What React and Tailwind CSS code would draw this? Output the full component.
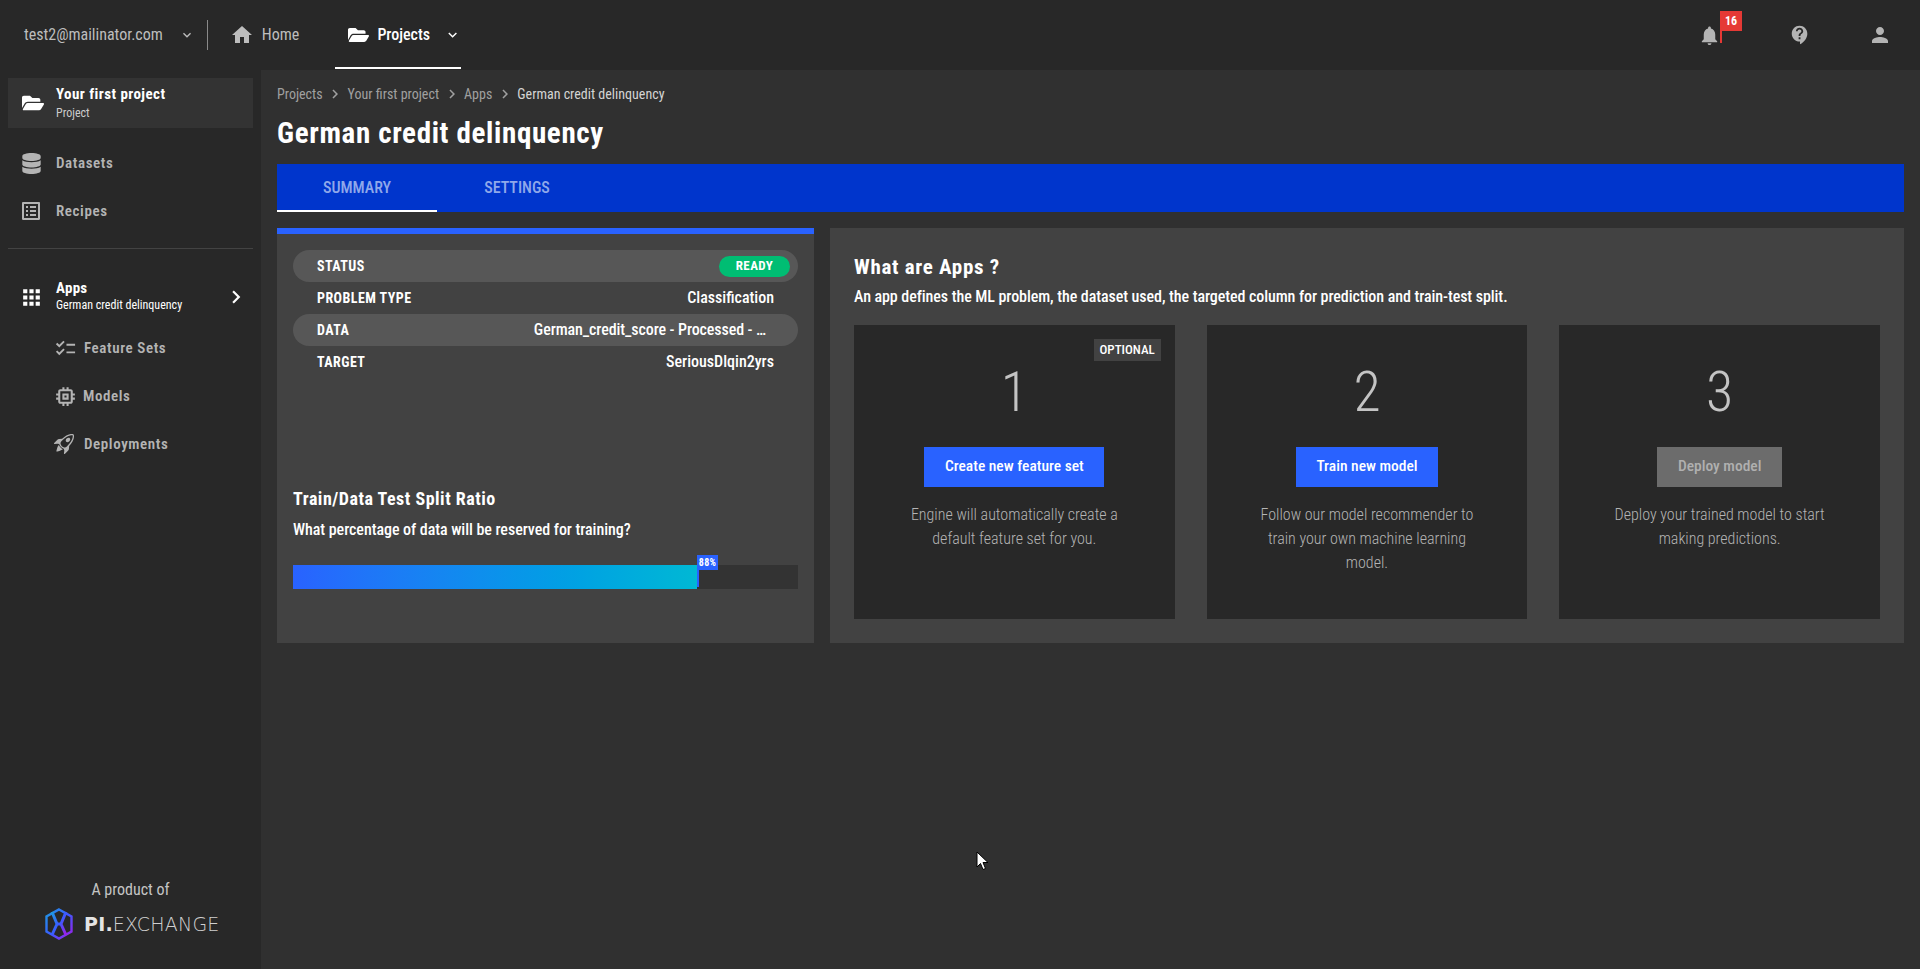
import React from "react";
import { FaDatabase, FaFolderOpen } from "react-icons/fa";
import {
  MdApps,
  MdChevronRight,
  MdContactSupport,
  MdHome,
  MdKeyboardArrowDown,
  MdNotifications,
  MdOutlineChecklist,
  MdOutlineListAlt,
  MdOutlineMemory,
  MdPerson,
} from "react-icons/md";
import { BsRocketTakeoff } from "react-icons/bs";

const BODY = "[font-family:Roboto,sans-serif] [font-stretch:75%]";
const HEAD = "[font-family:Roboto,sans-serif] [font-stretch:75%] font-bold";

const NAV_TOP = [
  { label: "Datasets", icon: FaDatabase, size: 21 },
  { label: "Recipes", icon: MdOutlineListAlt, size: 24 },
];

const NAV_SUB = [
  { label: "Feature Sets", icon: MdOutlineChecklist, size: 23, shift: "" },
  { label: "Models", icon: MdOutlineMemory, size: 25, shift: "-ml-px" },
  { label: "Deployments", icon: BsRocketTakeoff, size: 20, shift: "" },
];

const FACTS = [
  { label: "STATUS", pill: true },
  { label: "PROBLEM TYPE", value: "Classification" },
  { label: "DATA", value: "German_credit_score - Processed - …", inset: true },
  { label: "TARGET", value: "SeriousDlqin2yrs" },
];

const STEPS = [
  {
    n: 1,
    button: "Create new feature set",
    width: "w-[180px]",
    text: ["Engine will automatically create a", "default feature set for you."],
    optional: true,
  },
  {
    n: 2,
    button: "Train new model",
    width: "w-[142px]",
    text: ["Follow our model recommender to", "train your own machine learning", "model."],
  },
  {
    n: 3,
    button: "Deploy model",
    width: "w-[125px]",
    text: ["Deploy your trained model to start", "making predictions."],
    disabled: true,
  },
];

const Logo = () => (
  <svg width="28" height="32" viewBox="0 0 28 32" fill="none">
    <defs>
      <linearGradient id="lg" x1="0" y1="0" x2="1" y2="1">
        <stop offset="0" stopColor="#1e9be0" />
        <stop offset="0.5" stopColor="#3a5cff" />
        <stop offset="1" stopColor="#a01de8" />
      </linearGradient>
    </defs>
    <path d="M14 1.5 26.5 8.5V23.5L14 30.5 1.5 23.5V8.5Z" stroke="url(#lg)" strokeWidth="2.4" />
    <path d="M7 4 12 16 7 27M21 4 16 16 21 27M12 16H16" stroke="url(#lg)" strokeWidth="3" />
  </svg>
);

const Sidebar = () => (
  <aside className="flex w-[261px] shrink-0 flex-col bg-[#282828] text-[#b4b4b4]">
    <div className="mx-2 mt-2 flex h-[50px] items-center bg-[#333333]">
      <FaFolderOpen size={22} className="ml-[14px] text-white" />
      <div className="ml-[12px] pb-[2px]">
        <div className={`${HEAD} text-[15px] leading-5 tracking-[0.45px] text-white`}>Your first project</div>
        <div className={`${BODY} mt-px text-xs leading-4 text-[#cccccc]`}>Project</div>
      </div>
    </div>
    <div className="mt-[11px]">
      {NAV_TOP.map((item) => (
        <div key={item.label} className="flex h-12 items-center">
          <span className="flex w-14 justify-center pl-[6px]"><item.icon size={item.size} /></span>
          <span className={`${HEAD} text-[15px] font-semibold tracking-[0.6px]`}>{item.label}</span>
        </div>
      ))}
    </div>
    <div className="mx-2 mt-[13px] h-px bg-[#434343]" />
    <div className="mt-6 flex h-12 items-center text-white">
      <span className="flex w-14 justify-center pl-[7px]"><MdApps size={25} /></span>
      <div className="flex-1 pb-[2px]">
        <div className={`${HEAD} text-[15px] leading-[18px] tracking-[0.3px]`}>Apps</div>
        <div className={`${BODY} text-xs leading-4`}>German credit delinquency</div>
      </div>
      <MdChevronRight size={26} className="mr-3" />
    </div>
    <div className="mt-[3px]">
      {NAV_SUB.map((item) => (
        <div key={item.label} className="flex h-12 items-center pl-[54px]">
          <span className={`flex w-[30px] ${item.shift}`}><item.icon size={item.size} /></span>
          <span className={`${HEAD} text-[15px] font-semibold tracking-[0.6px]`}>{item.label}</span>
        </div>
      ))}
    </div>
    <div className="mt-auto pb-[29px]">
      <div className={`${BODY} text-center text-base leading-5 text-[#c4c4c4]`}>A product of</div>
      <div className="mt-2 flex items-center pl-[45px]">
        <Logo />
        <span className="ml-[11px] [font-family:'DejaVu_Sans',sans-serif] text-[19px] leading-none font-extralight tracking-[0.2px] text-[#d0d0d0]">
          <span className="font-bold text-[#e4e4e4]">PI.</span>EXCHANGE
        </span>
      </div>
    </div>
  </aside>
);

const TopBar = () => (
  <header className={`${BODY} flex h-[70px] shrink-0 items-center bg-[#282828] text-base`}>
    <span className="ml-6 text-[#bdbdbd]">test2@mailinator.com</span>
    <MdKeyboardArrowDown size={16} className="ml-4 text-[#bdbdbd]" />
    <span className="ml-3 h-[30px] w-px bg-[#8a8a8a]" />
    <div className="ml-[22px] flex items-center text-[#bdbdbd]">
      <MdHome size={24} />
      <span className="ml-2">Home</span>
    </div>
    <div className="relative ml-[36px] flex h-full w-[126px] items-center pl-[13px] text-white">
      <FaFolderOpen size={22} />
      <span className="ml-2 font-medium">Projects</span>
      <MdKeyboardArrowDown size={18} className="ml-[14px]" />
      <span className="absolute right-0 bottom-[1px] left-0 h-0.5 bg-white" />
    </div>
    <div className="ml-auto flex items-center text-[#b4b4b4]">
      <div className="relative">
        <MdNotifications size={23} />
        <div className="absolute top-[-13px] left-[22px] flex h-5 w-[22px] items-center justify-center bg-[#e53935] text-xs font-bold text-white">
          16
        </div>
        <div className="absolute top-[7px] left-[22px] h-3 w-0.5 bg-[#e53935]" />
      </div>
      <MdContactSupport size={22} className="ml-[68px]" />
      <MdPerson size={24} className="mr-[28px] ml-[57px]" />
    </div>
  </header>
);

const SummaryPanel = () => (
  <section className="flex flex-col border-t-[6px] border-[#2962ff] bg-[#424242] px-4 pt-4 pb-[53px]">
    <div>
      {FACTS.map((row, i) => (
        <div
          key={row.label}
          className={`flex h-8 items-center justify-between rounded-full pr-6 pl-6 ${i % 2 === 0 ? "bg-[#575757]" : ""}`}
        >
          <span className={`${HEAD} text-sm tracking-[0.45px] text-white`}>{row.label}</span>
          {row.pill ? (
            <span className={`${HEAD} -mr-4 flex h-[21px] w-[71px] items-center justify-center rounded-full bg-[#00bd73] text-[13px] tracking-[0.4px] text-white`}>
              READY
            </span>
          ) : (
            <span className={`${BODY} text-base font-medium text-white ${row.inset ? "mr-2 tracking-[-0.1px]" : ""}`}>{row.value}</span>
          )}
        </div>
      ))}
    </div>
    <div className="mt-auto">
      <div className={`${HEAD} text-lg leading-6 tracking-[0.5px] text-white`}>Train/Data Test Split Ratio</div>
      <div className={`${BODY} mt-[7px] text-base leading-6 font-medium tracking-[-0.05px] text-white`}>
        What percentage of data will be reserved for training?
      </div>
      <div className="mt-[23px] mb-px flex h-6 bg-[#333333]">
        <div className="h-full w-[404px] bg-gradient-to-r from-[#2962ff] to-[#00b8d4]" />
        <div className="relative h-[22px] w-0.5 bg-[#2962ff]">
          <div className={`${BODY} absolute top-[-10px] left-0 flex h-[15px] w-[21px] items-center justify-center bg-[#2962ff] text-[10px] font-bold tracking-[0.3px] text-white`}>
            88%
          </div>
        </div>
      </div>
    </div>
  </section>
);

const StepCard = ({ step }) => (
  <div className="relative flex h-[294px] flex-col items-center bg-[#282828] pt-[35px]">
    {step.optional && (
      <span className={`${BODY} absolute top-[14px] right-[14px] flex h-[22px] w-[67px] items-center justify-center bg-[#424242] text-[13px] font-medium text-white`}>
        OPTIONAL
      </span>
    )}
    <div className={`${BODY} text-[56px] leading-[64px] font-light text-[#c4c4c4]`}>{step.n}</div>
    <div
      className={`${BODY} mt-[23px] flex h-10 items-center justify-center text-[15.5px] font-medium ${step.width} ${step.disabled ? "bg-[#6c6c6c] text-[#b0b0b0]" : "bg-[#2962ff] text-white"}`}
    >
      {step.button}
    </div>
    <div className={`${BODY} mt-4 text-center text-base leading-6 font-light text-[#b4b4b4]`}>
      {step.text.map((line) => (
        <div key={line}>{line}</div>
      ))}
    </div>
  </div>
);

const AppsPanel = () => (
  <section className="bg-[#424242] px-6 pt-[25px] pb-6">
    <h2 className={`${HEAD} text-[21px] leading-7 tracking-[0.7px] text-white`}>What are Apps ?</h2>
    <p className={`${BODY} mt-1 text-base leading-6 font-medium tracking-[-0.07px] text-white`}>
      An app defines the ML problem, the dataset used, the targeted column for prediction and train-test split.
    </p>
    <div className="mt-4 grid grid-cols-3 gap-8">
      {STEPS.map((step) => (
        <StepCard key={step.n} step={step} />
      ))}
    </div>
  </section>
);

const App = () => (
  <div className="relative flex h-screen flex-col overflow-hidden bg-[#303030]">
    <TopBar />
    <div className="flex min-h-0 flex-1">
      <Sidebar />
      <main className="flex-1 px-4">
        <nav className={`${BODY} mt-[14px] flex h-5 items-center gap-[5.5px] text-sm text-[#a0a0a0]`}>
          <span>Projects</span>
          <MdChevronRight size={18} className="-mx-0.5" />
          <span>Your first project</span>
          <MdChevronRight size={18} className="-mx-0.5" />
          <span>Apps</span>
          <MdChevronRight size={18} className="-mx-0.5" />
          <span className="text-[#d4d4d4]">German credit delinquency</span>
        </nav>
        <h1 className={`${HEAD} mt-[11px] text-[29px] leading-9 tracking-[0.65px] text-white`}>German credit delinquency</h1>
        <div className={`${BODY} mt-[13px] flex h-12 bg-[#0035cc] text-base font-medium text-[#8fa8ea]`}>
          <div className="relative flex w-40 items-center justify-center">
            SUMMARY
            <span className="absolute right-0 bottom-0 left-0 h-0.5 bg-white" />
          </div>
          <div className="flex w-40 items-center justify-center">SETTINGS</div>
        </div>
        <div className="mt-4 grid grid-cols-[537px_1fr] gap-4">
          <SummaryPanel />
          <AppsPanel />
        </div>
      </main>
    </div>
    <svg className="absolute top-[851px] left-[976px]" width="14" height="20" viewBox="0 0 14 20">
      <path d="M1 1V16L4.5 12.5 7 18.5 9.5 17.5 7 11.5H12Z" fill="#fff" stroke="#000" strokeWidth="1" />
    </svg>
  </div>
);

export default App;
